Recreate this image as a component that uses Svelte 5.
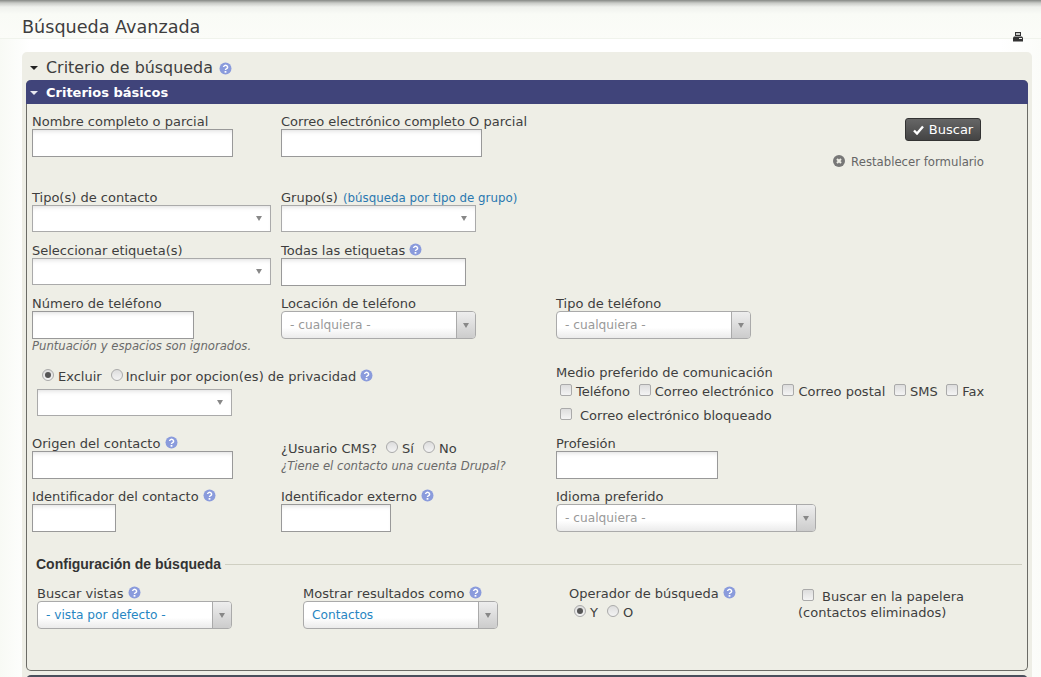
<script>
  const comms = ["Teléfono", "Correo electrónico", "Correo postal", "SMS", "Fax"];
</script>

{#snippet help()}
  <svg class="help" width="13" height="13" viewBox="0 0 13 13" aria-hidden="true">
    <circle cx="6.5" cy="6.5" r="6" fill="#8a9bdc" />
    <path d="M4.6 5.1a2 1.8 0 1 1 3 1.6c-.8.4-1.1.7-1.1 1.4" fill="none" stroke="#fff" stroke-width="1.5" />
    <rect x="5.6" y="9" width="1.8" height="1.7" fill="#fff" />
  </svg>
{/snippet}

{#snippet plainSelect(cls)}
  <div class="plain-select {cls}"><span class="arrow"></span></div>
{/snippet}

{#snippet fancySelect(text, cls)}
  <div class="fancy-select {cls}">
    <span class="value">{text}</span>
    <span class="fancy-arrow"><span class="arrow"></span></span>
  </div>
{/snippet}

<div class="page">
  <header class="title-bar">
    <h1>Búsqueda Avanzada</h1>
    <svg class="print" width="10" height="10" viewBox="0 0 10 10" aria-hidden="true">
      <path d="M2 0h6v4H2z M3 1.2v1.6h4V1.2z" fill="#333" fill-rule="evenodd" />
      <path d="M1 4.5h8l1 1v4H0v-4z" fill="#333" />
      <rect x="6" y="6" width="3" height="1" fill="#eee" />
    </svg>
  </header>

  <section class="outer">
    <h2><span class="tri dark"></span>Criterio de búsqueda {@render help()}</h2>
    <div class="panel">
      <div class="panel-head"><span class="tri light"></span>Criterios básicos</div>
      <div class="panel-body">
        <div class="grid">
          <div class="row r1">
            <div class="cell">
              <label for="n1">Nombre completo o parcial</label>
              <input id="n1" class="w201" />
            </div>
            <div class="cell">
              <label for="n2">Correo electrónico completo O parcial</label>
              <input id="n2" class="w201" />
            </div>
            <div class="cell actions">
              <button class="search">
                <svg width="11" height="10" viewBox="0 0 11 10" aria-hidden="true">
                  <path d="M1 5.5 4 8.5 10 1.5" fill="none" stroke="#fff" stroke-width="2.4" />
                </svg>
                Buscar
              </button>
              <div class="reset">
                <svg width="12" height="12" viewBox="0 0 12 12" aria-hidden="true">
                  <circle cx="6" cy="6" r="6" fill="#777" />
                  <path d="M4 4l4 4M8 4l-4 4" stroke="#eeeee6" stroke-width="2" />
                </svg>
                Restablecer formulario
              </div>
            </div>
          </div>

          <div class="row r2">
            <div class="cell">
              <span class="lbl">Tipo(s) de contacto</span>
              {@render plainSelect("w239")}
            </div>
            <div class="cell">
              <span class="lbl">Grupo(s) <a href="#g">(búsqueda por tipo de grupo)</a></span>
              {@render plainSelect("w195")}
            </div>
          </div>

          <div class="row r3">
            <div class="cell">
              <span class="lbl">Seleccionar etiqueta(s)</span>
              {@render plainSelect("w239")}
            </div>
            <div class="cell">
              <label for="n3">Todas las etiquetas {@render help()}</label>
              <input id="n3" class="w185" />
            </div>
          </div>

          <div class="row r4">
            <div class="cell">
              <label for="n4">Número de teléfono</label>
              <input id="n4" class="w162" />
              <div class="hint">Puntuación y espacios son ignorados.</div>
            </div>
            <div class="cell">
              <span class="lbl">Locación de teléfono</span>
              {@render fancySelect("- cualquiera -", "w195 muted")}
            </div>
            <div class="cell">
              <span class="lbl">Tipo de teléfono</span>
              {@render fancySelect("- cualquiera -", "w195 muted")}
            </div>
          </div>

          <div class="row r5">
            <div class="cell span2 privacy">
              <div class="radios">
                <span class="radio on"></span>Excluir
                <span class="radio gap"></span>Incluir por opcion(es) de privacidad {@render help()}
              </div>
              {@render plainSelect("w195")}
            </div>
            <div class="cell comm">
              <span class="lbl">Medio preferido de comunicación</span>
              <div class="checks">
                {#each comms as c}
                  <span class="check-item"><span class="check"></span>{c}</span>
                {/each}
              </div>
              <div class="check-item blocked"><span class="check"></span>Correo electrónico bloqueado</div>
            </div>
          </div>

          <div class="row r6">
            <div class="cell">
              <label for="n5">Origen del contacto {@render help()}</label>
              <input id="n5" class="w201" />
            </div>
            <div class="cell cms">
              <div class="cms-line">
                ¿Usuario CMS? <span class="radio left"></span>Sí <span class="radio left"></span>No
              </div>
              <div class="hint">¿Tiene el contacto una cuenta Drupal?</div>
            </div>
            <div class="cell">
              <label for="n6">Profesión</label>
              <input id="n6" class="w162" />
            </div>
          </div>

          <div class="row r7">
            <div class="cell">
              <label for="n7">Identificador del contacto {@render help()}</label>
              <input id="n7" class="w84" />
            </div>
            <div class="cell">
              <label for="n8">Identificador externo {@render help()}</label>
              <input id="n8" class="w110" />
            </div>
            <div class="cell">
              <span class="lbl">Idioma preferido</span>
              {@render fancySelect("- cualquiera -", "w260 muted")}
            </div>
          </div>
        </div>

        <div class="legend"><span>Configuración de búsqueda</span><i></i></div>

        <div class="settings">
          <div class="set-a">
            <span class="lbl">Buscar vistas {@render help()}</span>
            {@render fancySelect("- vista por defecto -", "w195 link")}
          </div>
          <div class="set-b">
            <span class="lbl">Mostrar resultados como {@render help()}</span>
            {@render fancySelect("Contactos", "w195 link")}
          </div>
          <div class="set-c">
            <span class="lbl">Operador de búsqueda {@render help()}</span>
            <div class="op">
              <span class="radio on"></span>Y <span class="radio left"></span>O
            </div>
          </div>
          <div class="set-d">
            <div class="trash"><span class="check"></span>Buscar en la papelera</div>
            <div>(contactos eliminados)</div>
          </div>
        </div>
      </div>
    </div>
    <div class="next-bar"></div>
  </section>
</div>

<style>
  :global(body) {
    margin: 0;
    background: #fff;
  }
  .page {
    height: 677px;
    overflow: hidden;
    font-family: "DejaVu Sans", Verdana, sans-serif;
    font-size: 13px;
    color: #3e3e3e;
    background: linear-gradient(90deg, #f8faf5 0, #fff 30px, #fff 1000px, #fbfcf9 100%);
  }
  .title-bar {
    height: 39px;
    box-sizing: border-box;
    padding: 17px 18px 0 22px;
    display: flex;
    justify-content: space-between;
    border-bottom: 1px solid #f0f3ec;
    background: linear-gradient(#858884 0, #c8cac6 3px, #eff1ed 7px, #f9fbf6 14px, #fbfcf8 100%);
  }
  h1 {
    margin: 0;
    font-size: 17.6px;
    font-weight: 400;
    line-height: 20px;
    color: #3e3e3e;
  }
  .print {
    margin-top: 15px;
  }
  .outer {
    margin: 13px 9px 0 22px;
    padding: 4px 4px 0;
    background: #eeeee6;
    border-radius: 5px 5px 0 0;
    height: 640px;
    box-sizing: border-box;
  }
  h2 {
    margin: 0;
    height: 24px;
    padding-left: 4px;
    font-size: 15.9px;
    line-height: 24px;
    font-weight: 400;
    color: #3e3e3e;
    display: flex;
    align-items: center;
  }
  h2 .help {
    margin-left: 6px;
  }
  .tri {
    display: inline-block;
    width: 0;
    height: 0;
    border: 4px solid transparent;
    border-bottom: 0;
    margin-right: 8px;
  }
  .tri.dark {
    border-top-color: #222;
  }
  .tri.light {
    border-top-color: #e8e8f0;
    vertical-align: 2px;
  }
  .panel {
    border: 1px solid #6b6b66;
    border-top: 0;
    border-radius: 5px;
    height: 591px;
    box-sizing: border-box;
  }
  .panel-head {
    height: 24px;
    margin: 0 -1px;
    padding-left: 4px;
    background: #40447a;
    color: #fff;
    font-weight: 700;
    font-size: 13px;
    line-height: 25px;
    border-radius: 5px 5px 0 0;
  }
  .panel-body {
    padding: 0 5px;
  }
  .row {
    display: grid;
    grid-template-columns: 249px 275px 1fr;
  }
  .r1 { height: 76px; padding-top: 9px; }
  .r2 { height: 53px; }
  .r3 { height: 53px; }
  .r4 { height: 60px; }
  .r5 { height: 80px; }
  .r6 { height: 53px; }
  .r7 { height: 66px; }
  .lbl,
  label {
    display: block;
    line-height: 18px;
    height: 16px;
    white-space: nowrap;
  }
  .help {
    vertical-align: -1px;
  }
  input {
    display: block;
    box-sizing: border-box;
    height: 28px;
    margin: 0;
    padding: 0 4px;
    background: #fff;
    border: 1px solid #999;
    border-radius: 0;
    box-shadow: inset 0 4px 5px -3px #ddd;
    outline: none;
  }
  .w201 { width: 201px; }
  .w185 { width: 185px; }
  .w162 { width: 162px; }
  .w84 { width: 84px; }
  .w110 { width: 110px; }
  .w239 { width: 239px; }
  .w195 { width: 195px; }
  .w260 { width: 260px; }
  .plain-select {
    box-sizing: border-box;
    height: 27px;
    background: #fff;
    border: 1px solid #aaa;
    box-shadow: inset 0 4px 5px -3px #ddd;
    display: flex;
    align-items: center;
    justify-content: flex-end;
    padding-right: 8px;
  }
  .arrow {
    display: block;
    width: 0;
    height: 0;
    border: 3.5px solid transparent;
    border-top: 5px solid #888;
    border-bottom: 0;
  }
  .fancy-select {
    box-sizing: border-box;
    height: 28px;
    display: flex;
    border: 1px solid #aaa;
    border-radius: 4px;
    background: linear-gradient(#fff 60%, #ebebeb);
    overflow: hidden;
    font-size: 12.2px;
  }
  .value {
    flex: 1;
    padding-left: 8px;
    line-height: 26px;
  }
  .muted .value { color: #999; }
  .link .value { color: #2786c2; }
  .fancy-arrow {
    width: 18px;
    border-left: 1px solid #aaa;
    background: linear-gradient(#eee, #ccc);
    display: flex;
    align-items: center;
    justify-content: center;
  }
  .hint {
    font-size: 11.65px;
    font-style: italic;
    color: #6a6a6a;
    line-height: 16px;
    margin-top: -1px;
    white-space: nowrap;
  }
  a {
    color: #2a78b0;
    font-size: 11.85px;
    text-decoration: none;
    margin-left: 1px;
  }
  .actions {
    display: flex;
    flex-direction: column;
    align-items: flex-end;
    padding-right: 39px;
  }
  .search {
    box-sizing: border-box;
    width: 76px;
    height: 23px;
    margin: 5px 2px 0 0;
    padding: 0;
    border: 1px solid #333;
    border-radius: 3px;
    background: linear-gradient(#666, #444);
    color: #fff;
    font: 13px "DejaVu Sans", sans-serif;
    display: flex;
    align-items: center;
    justify-content: center;
    gap: 5px;
  }
  .reset {
    margin-top: 13px;
    margin-right: -1px;
    font-size: 11.7px;
    color: #666;
    line-height: 16px;
    display: flex;
    align-items: center;
    gap: 6px;
    white-space: nowrap;
  }
  .reset svg {
    margin-top: -2px;
  }
  .radio {
    display: inline-block;
    box-sizing: border-box;
    width: 12px;
    height: 12px;
    border-radius: 50%;
    border: 1px solid #aaa;
    background: linear-gradient(#ddd, #f4f4f4);
    margin-right: 4px;
    position: relative;
  }
  .radio.on::after {
    content: "";
    position: absolute;
    inset: 2px;
    border-radius: 50%;
    background: #555;
  }
  .radio.gap { margin-left: 5px; margin-right: 3px; }
  .radio.left { margin-left: 5px; }
  .check {
    display: inline-block;
    box-sizing: border-box;
    width: 12px;
    height: 12px;
    border: 1px solid #aaa;
    border-radius: 2px;
    background: linear-gradient(#ddd, #f4f4f4);
    margin-right: 4px;
  }
  .privacy {
    grid-column: span 2;
    padding: 14px 0 0 5px;
  }
  .radios {
    padding-left: 5px;
    height: 20px;
    line-height: 16px;
    white-space: nowrap;
  }
  .comm {
    padding-top: 9px;
  }
  .checks {
    display: flex;
    gap: 8.6px;
    margin-top: 2px;
    padding-left: 4px;
    white-space: nowrap;
    line-height: 20px;
  }
  .check-item {
    white-space: nowrap;
  }
  .blocked {
    padding-left: 4px;
    line-height: 20px;
    margin-top: 4px;
  }
  .blocked .check {
    margin-right: 8px;
  }
  .cms {
    padding-top: 6px;
  }
  .cms-line {
    line-height: 16px;
    white-space: nowrap;
  }
  .cms .hint {
    margin-top: 1px;
  }
  .legend {
    display: flex;
    align-items: center;
    gap: 4px;
    height: 20px;
    margin: 0 0 0 4px;
    font-family: "Liberation Sans", Arial, sans-serif;
    font-size: 14px;
    font-weight: 700;
    color: #333;
  }
  .legend i {
    flex: 1;
    height: 1px;
    background: #cfcfc2;
  }
  .settings {
    display: grid;
    grid-template-columns: 266px 266px 229px 1fr;
    padding: 11px 0 0 5px;
  }
  .op {
    padding-left: 5px;
    line-height: 18px;
    margin-top: 3px;
  }
  .set-d {
    padding-top: 4px;
    line-height: 16px;
  }
  .trash {
    padding-left: 4px;
  }
  .trash .check {
    margin-right: 8px;
  }
  .next-bar {
    height: 6px;
    margin-top: 4px;
    background: #4a4f5c;
    border-radius: 5px 5px 0 0;
  }
</style>
